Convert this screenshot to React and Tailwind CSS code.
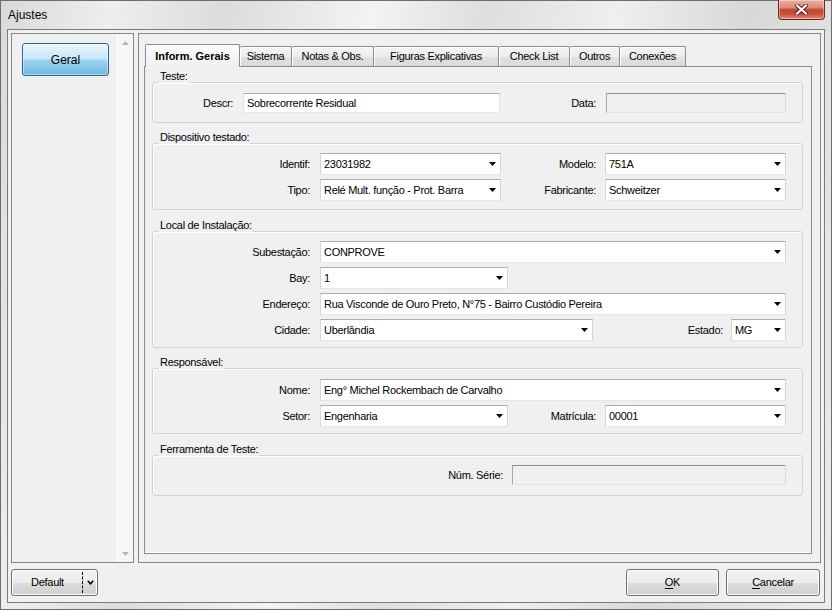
import React from "react";

function DownArrow() {
  return (
    <svg width="7" height="4" viewBox="0 0 7 4" className="block">
      <path d="M0 0H7L3.5 4Z" fill="#000" />
    </svg>
  );
}

function Combo({ value, className = "" }) {
  return (
    <div
      className={`h-[22px] flex items-center bg-white border border-t-[#abadb3] border-l-[#d3d6db] border-r-[#d3d6db] border-b-[#e3e6ea] ${className}`}
    >
      <span className="flex-1 min-w-0 pl-[3px] whitespace-nowrap overflow-hidden">{value}</span>
      <span className="w-[16px] h-full flex items-center justify-center shrink-0">
        <DownArrow />
      </span>
    </div>
  );
}

function TextBox({ value = "", disabled = false, className = "" }) {
  return (
    <div
      className={`h-[20px] flex items-center pl-[3px] whitespace-nowrap border ${
        disabled
          ? "bg-[#f0f0f0] border-t-[#8f8f8f] border-l-[#a8a8a8] border-r-[#dadada] border-b-[#e4e4e4]"
          : "bg-white border-t-[#abadb3] border-l-[#dbdfe6] border-r-[#dbdfe6] border-b-[#e3e9ef]"
      } ${className}`}
    >
      {value}
    </div>
  );
}

function Group({ title, className = "", children }) {
  return (
    <div
      className={`relative mx-[7px] mr-[8px] border border-[#d0d4d8] rounded-[3px] shadow-[inset_1px_1px_0_#ffffff] ${className}`}
    >
      <span className="absolute left-[6px] -top-[13px] px-[1px] leading-[13px] bg-[#f0f0f0] whitespace-nowrap">
        {title}
      </span>
      {children}
    </div>
  );
}

function Lbl({ children, className = "" }) {
  return <span className={`text-right whitespace-nowrap shrink-0 ${className}`}>{children}</span>;
}

const tabs = [
  ["Inform. Gerais", 95, true],
  ["Sistema", 52],
  ["Notas & Obs.", 82],
  ["Figuras Explicativas", 125],
  ["Check List", 71],
  ["Outros", 50],
  ["Conexões", 66],
];

const winBtn =
  "border border-[#707070] rounded-[3px] bg-[linear-gradient(#f2f2f2_0%,#ebebeb_50%,#dddddd_51%,#cfcfcf_100%)] shadow-[inset_0_0_0_1px_#fbfbfb]";

export default function App() {
  return (
    <div className="w-[832px] h-[610px] overflow-hidden flex flex-col font-['Liberation_Sans',Arial,sans-serif] text-[11px] tracking-[-0.3px] text-black bg-[linear-gradient(100deg,#d9d9d9_0%,#eeeeee_12%,#dcdcdc_24%,#f3f3f3_40%,#dedede_52%,#efefef_66%,#d8d8d8_80%,#ececec_100%)] shadow-[inset_0_0_0_1px_#6d6d6d]">
      {/* Title bar */}
      <div className="h-[29px] flex justify-between shrink-0">
        <span className="pl-[8px] pt-[8px] text-[12px] leading-[14px] tracking-normal">Ajustes</span>
        <div className="mr-[7px] w-[47px] h-[20px] rounded-b-[4px] border border-t-0 border-[#6e2a20] bg-[linear-gradient(#eab3a5_0%,#dc8a77_40%,#c7442d_52%,#c9503a_75%,#e0907a_100%)] shadow-[inset_0_0_0_1px_rgba(255,255,255,0.35)] flex items-center justify-center">
          <svg width="13" height="11" viewBox="0 0 13 11">
            <path d="M2 1.5L11 9.5M11 1.5L2 9.5" stroke="#5a1d14" strokeWidth="4" strokeLinecap="square" />
            <path d="M2 1.5L11 9.5M11 1.5L2 9.5" stroke="#ffffff" strokeWidth="2.2" strokeLinecap="square" />
          </svg>
        </div>
      </div>

      {/* Client area */}
      <div className="flex-1 mx-[7px] mb-[7px] border border-[#7b7b7b] bg-[#f0f0f0] flex flex-col px-[3px] pt-[3px] pb-[6px]">
        <div className="h-[530px] flex gap-[4px]">
          {/* Left panel */}
          <div className="w-[123px] border border-[#828790] flex">
            <div className="flex-1 pl-[10px] pt-[9px]">
              <div className="w-[87px] h-[33px] rounded-[3px] border border-[#2c628b] bg-[linear-gradient(#eaf6fd_0%,#c7e7f8_48%,#9dd3f0_52%,#6fb8e0_100%)] shadow-[inset_0_0_0_1px_rgba(255,255,255,0.45)] flex items-center justify-center text-[12px] tracking-normal">
                Geral
              </div>
            </div>
            <div className="w-[16px] bg-[#f6f6f6] border-l border-l-[#ffffff] flex flex-col justify-between">
              <div className="h-[17px] flex items-center justify-center">
                <svg width="7" height="4" viewBox="0 0 7 4">
                  <path d="M0 4H7L3.5 0Z" fill="#b4b4b4" />
                </svg>
              </div>
              <div className="h-[17px] flex items-center justify-center">
                <svg width="7" height="4" viewBox="0 0 7 4">
                  <path d="M0 0H7L3.5 4Z" fill="#b4b4b4" />
                </svg>
              </div>
            </div>
          </div>

          {/* Main panel */}
          <div className="flex-1 border border-[#828790] flex flex-col pl-[5px] pt-[10px] pr-[8px] pb-[8px]">
            <div className="h-[22px] pl-[1px] flex items-end shrink-0">
              {tabs.map(([name, w, sel]) =>
                sel ? (
                  <div
                    key={name}
                    style={{ width: w }}
                    className="relative z-10 h-[23px] -mb-px border border-b-0 border-[#898c95] rounded-t-[2px] bg-[linear-gradient(#fbfbfb,#f0f0f0)] flex items-center justify-center font-bold tracking-normal whitespace-nowrap"
                  >
                    {name}
                  </div>
                ) : (
                  <div
                    key={name}
                    style={{ width: w }}
                    className="h-[20px] border-t border-r border-[#898c95] rounded-t-[2px] bg-[linear-gradient(#f4f4f4_0%,#ececec_50%,#e2e2e2_51%,#dadada_100%)] shadow-[inset_1px_1px_0_#ffffff] flex items-center justify-center whitespace-nowrap"
                  >
                    {name}
                  </div>
                )
              )}
            </div>

            <div className="flex-1 border border-[#898c95] bg-[#f0f0f0] shadow-[inset_0_-1px_0_#ffffff] flex flex-col">
              {/* Teste */}
              <Group title="Teste:" className="mt-[15px] pt-[10px] pb-[9px] pr-[16px]">
                <div className="flex items-center">
                  <Lbl className="w-[90px] pr-[10px]">Descr:</Lbl>
                  <TextBox value="Sobrecorrente Residual" className="w-[257px]" />
                  <Lbl className="flex-1 pr-[10px]">Data:</Lbl>
                  <TextBox disabled className="w-[180px]" />
                </div>
              </Group>

              {/* Dispositivo testado */}
              <Group title="Dispositivo testado:" className="mt-[20px] pt-[9px] pb-[8px] pr-[16px] flex flex-col gap-[4px]">
                <div className="flex items-center">
                  <Lbl className="w-[167px] pr-[10px]">Identif:</Lbl>
                  <Combo value="23031982" className="w-[181px]" />
                  <Lbl className="flex-1 pr-[9px]">Modelo:</Lbl>
                  <Combo value="751A" className="w-[181px]" />
                </div>
                <div className="flex items-center">
                  <Lbl className="w-[167px] pr-[10px]">Tipo:</Lbl>
                  <Combo value="Relé Mult. função - Prot. Barra" className="w-[181px]" />
                  <Lbl className="flex-1 pr-[9px]">Fabricante:</Lbl>
                  <Combo value="Schweitzer" className="w-[181px]" />
                </div>
              </Group>

              {/* Local de Instalação */}
              <Group title="Local de Instalação:" className="mt-[21px] pt-[9px] pb-[6px] pr-[16px] flex flex-col gap-[4px]">
                <div className="flex items-center">
                  <Lbl className="w-[167px] pr-[10px]">Subestação:</Lbl>
                  <Combo value="CONPROVE" className="flex-1" />
                </div>
                <div className="flex items-center">
                  <Lbl className="w-[167px] pr-[10px]">Bay:</Lbl>
                  <Combo value="1" className="w-[188px]" />
                </div>
                <div className="flex items-center">
                  <Lbl className="w-[167px] pr-[10px]">Endereço:</Lbl>
                  <Combo value="Rua Visconde de Ouro Preto, N°75 - Bairro Custódio Pereira" className="flex-1" />
                </div>
                <div className="flex items-center">
                  <Lbl className="w-[167px] pr-[10px]">Cidade:</Lbl>
                  <Combo value="Uberlândia" className="w-[273px]" />
                  <Lbl className="flex-1 pr-[8px]">Estado:</Lbl>
                  <Combo value="MG" className="w-[55px]" />
                </div>
              </Group>

              {/* Responsável */}
              <Group title="Responsável:" className="mt-[20px] pt-[10px] pb-[6px] pr-[16px] flex flex-col gap-[4px]">
                <div className="flex items-center">
                  <Lbl className="w-[167px] pr-[10px]">Nome:</Lbl>
                  <Combo value="Eng° Michel Rockembach de Carvalho" className="flex-1" />
                </div>
                <div className="flex items-center">
                  <Lbl className="w-[167px] pr-[10px]">Setor:</Lbl>
                  <Combo value="Engenharia" className="w-[188px]" />
                  <Lbl className="flex-1 pr-[9px]">Matrícula:</Lbl>
                  <Combo value="00001" className="w-[181px]" />
                </div>
              </Group>

              {/* Ferramenta de Teste */}
              <Group title="Ferramenta de Teste:" className="mt-[21px] pt-[9px] pb-[10px] pr-[16px]">
                <div className="flex items-center">
                  <Lbl className="flex-1 pr-[9px]">Núm. Série:</Lbl>
                  <TextBox disabled className="w-[274px]" />
                </div>
              </Group>
            </div>
          </div>
        </div>

        {/* Bottom buttons */}
        <div className="mt-[6px] h-[27px] flex">
          <div className={`w-[87px] flex ${winBtn}`}>
            <span className="flex-1 flex items-center justify-center pl-[1px]">Default</span>
            <span className="my-[2px] border-l border-dashed border-l-[#000]" />
            <span className="w-[14px] flex items-center justify-center">
              <svg width="7" height="5" viewBox="0 0 7 5">
                <path d="M0.8 0.8L3.5 3.8L6.2 0.8" fill="none" stroke="#000" strokeWidth="1.6" />
              </svg>
            </span>
          </div>
          <div className="flex-1" />
          <div className={`w-[93px] flex items-center justify-center ${winBtn}`}>
            <span>
              <span className="underline underline-offset-2">O</span>K
            </span>
          </div>
          <div className={`ml-[7px] mr-[1px] w-[94px] flex items-center justify-center ${winBtn}`}>
            <span>
              <span className="underline underline-offset-2">C</span>ancelar
            </span>
          </div>
        </div>
      </div>
    </div>
  );
}
